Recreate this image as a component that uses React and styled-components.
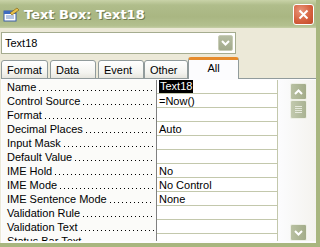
import React from 'react';
import styled, {createGlobalStyle} from 'styled-components';

const Global = createGlobalStyle`
    html, body {
        margin: 0;
        padding: 0;
        background: #ece9d8;
    }
    body {
        font-family: "Liberation Sans", Arial, sans-serif;
        font-size: 11px;
        color: #000;
    }
`;

const Window = styled.div`
    width: 320px;
    height: 247px;
    overflow: hidden;
    display: flex;
    flex-direction: column;
    background: #ece9d8;
    box-sizing: border-box;
    border-right: 4px solid #a8b67f;
    border-bottom: 4px solid #a8b67f;
`;

const TitleBar = styled.div`
    height: 28px;
    margin-right: -4px;
    flex: none;
    display: flex;
    align-items: center;
    padding: 0 6px 0 3px;
    background: linear-gradient(#c9d3a8 0%, #b0bd8b 18%, #a9b682 60%, #b3c08f 92%, #c5cea6 100%);
`;

const Title = styled.div`
    flex: 1;
    margin-left: 4px;
    color: #fff;
    font-family: "DejaVu Sans", sans-serif;
    font-weight: bold;
    font-size: 13px;
    letter-spacing: 0;
    text-shadow: 1px 1px 0 #6f7a4e;
`;

const CloseButton = styled.div`
    width: 21px;
    height: 21px;
    box-sizing: border-box;
    border: 1px solid #fff;
    border-radius: 3px;
    background: radial-gradient(circle at 35% 30%, #e8957a, #d6623f 55%, #c1492a);
    display: flex;
    align-items: center;
    justify-content: center;
`;

const Body = styled.div`
    flex: 1;
    display: flex;
    flex-direction: column;
    padding: 4px 0 0 1px;
    min-height: 0;
`;

const Combo = styled.div`
    width: 235px;
    height: 22px;
    box-sizing: border-box;
    border: 1px solid #a5ac8f;
    background: #fff;
    display: flex;
    align-items: center;
    padding: 0 2px 0 3px;
`;

const ComboText = styled.div`
    flex: 1;
`;

const DropButton = styled.div`
    width: 15px;
    height: 16px;
    border-radius: 2px;
    background: linear-gradient(#b6bda2, #a2aa8c);
    border: 1px solid #c8ccb6;
    box-sizing: border-box;
    display: flex;
    align-items: center;
    justify-content: center;
`;

const TabStrip = styled.div`
    display: flex;
    align-items: flex-end;
    height: 22px;
    margin-top: 3px;
    flex: none;
`;

const Tab = styled.div`
    width: ${p => p.w}px;
    height: ${p => (p.active ? 22 : 19)}px;
    box-sizing: border-box;
    margin-right: ${p => p.gap}px;
    border: 1px solid #919b9c;
    border-bottom: ${p => (p.active ? 'none' : '1px solid #919b9c')};
    border-top: ${p => (p.active ? '3px solid #e68b2c' : '1px solid #919b9c')};
    border-radius: 3px 3px 0 0;
    background: ${p => (p.active ? '#fcfcfe' : 'linear-gradient(#fff, #f3f3ef 70%, #e6e5de)')};
    display: flex;
    align-items: center;
    justify-content: ${p => (p.active ? 'center' : 'flex-start')};
    padding-left: ${p => (p.active ? 0 : 5)}px;
    padding-bottom: ${p => (p.active ? 3 : 0)}px;
    position: relative;
    z-index: ${p => (p.active ? 1 : 0)};
`;

const Panel = styled.div`
    flex: 1;
    display: flex;
    min-height: 0;
    margin-top: -1px;
    border-top: 1px solid #919b9c;
    background: #fcfcfe;
    padding: 1px 0 2px 1px;
`;

const Grid = styled.div`
    width: 275px;
    flex: none;
    overflow: hidden;
    background: #fff;
    border-right: 1px solid #c3c8ac;
`;

const Row = styled.div`
    display: flex;
    height: 14px;
`;

const Label = styled.div`
    width: 155px;
    flex: none;
    display: flex;
    align-items: center;
    padding-left: 5px;
    box-sizing: border-box;
    border-right: 1px solid #808080;
    background: #fbfbf9;
    white-space: nowrap;
`;

const Leader = styled.span`
    flex: 1;
    align-self: stretch;
    margin: 0 2px 0 3px;
    background-image: repeating-linear-gradient(to right, #000 0 1px, transparent 1px 4px);
    background-size: 100% 1px;
    background-repeat: no-repeat;
    background-position: 0 10px;
`;

const Value = styled.div`
    flex: 1;
    box-sizing: border-box;
    border-bottom: 1px solid #c3c8ac;
    padding-left: 2px;
    display: flex;
    align-items: center;
    white-space: nowrap;
`;

const Selected = styled.span`
    background: #000;
    color: #fff;
    padding: 0 1px;
    line-height: 13px;
`;

const Scrollbar = styled.div`
    flex: 1;
    display: flex;
    flex-direction: column;
    align-items: center;
    padding: 3px 0 0 3px;
    background: linear-gradient(to right, #fcfcfe, #f4f3ee);
`;

const ScrollButton = styled.div`
    width: 17px;
    height: 17px;
    box-sizing: border-box;
    border: 1px solid #eef0e6;
    border-radius: 2px;
    background: linear-gradient(to right, #b9c1a2, #a3ac89);
    display: flex;
    align-items: center;
    justify-content: center;
    flex: none;
`;

const Thumb = styled.div`
    width: 17px;
    height: 19px;
    box-sizing: border-box;
    border: 1px solid #eef0e6;
    border-radius: 2px;
    background: linear-gradient(to right, #c2c9ae, #aab393);
    display: flex;
    flex-direction: column;
    align-items: center;
    justify-content: center;
    gap: 1px;
`;

const Grip = styled.div`
    width: 7px;
    height: 1px;
    background: #e6e9dc;
`;

const Track = styled.div`
    flex: 1;
`;

const rows = [
    ['Name', 'Text18', true],
    ['Control Source', '=Now()'],
    ['Format', ''],
    ['Decimal Places', 'Auto'],
    ['Input Mask', ''],
    ['Default Value', ''],
    ['IME Hold', 'No'],
    ['IME Mode', 'No Control'],
    ['IME Sentence Mode', 'None'],
    ['Validation Rule', ''],
    ['Validation Text', ''],
    ['Status Bar Text', ''],
];

const tabs = [
    {name: 'Format', w: 47, gap: 2},
    {name: 'Data', w: 46, gap: 2},
    {name: 'Event', w: 46, gap: 0},
    {name: 'Other', w: 44, gap: 0},
    {name: 'All', w: 51, gap: 0, active: true},
];

const Chevron = ({up}) => (
    <svg width="9" height="6" viewBox="0 0 9 6">
        <path d={up ? 'M1 5 L4.5 1.5 L8 5' : 'M1 1 L4.5 4.5 L8 1'} fill="none" stroke="#fff" strokeWidth="2" />
    </svg>
);

const SheetIcon = () => (
    <svg width="17" height="15" viewBox="0 0 17 15">
        <rect x="1" y="4" width="12" height="10" fill="#fff" stroke="#3a5fa8" />
        <rect x="1" y="4" width="12" height="3" fill="#3f6cc0" />
        <path d="M3 9 H11 M3 11 H11" stroke="#6f8fc8" />
        <path d="M7 6 L14 1 L16 3 L9 8 Z" fill="#e8c24a" stroke="#8a6a1a" strokeWidth="0.7" />
    </svg>
);

export default function App() {
    return (
        <Window>
            <Global />
            <TitleBar>
                <SheetIcon />
                <Title>Text Box: Text18</Title>
                <CloseButton>
                    <svg width="11" height="11" viewBox="0 0 11 11">
                        <path d="M1.5 1.5 L9.5 9.5 M9.5 1.5 L1.5 9.5" stroke="#fff" strokeWidth="2" />
                    </svg>
                </CloseButton>
            </TitleBar>
            <Body>
                <Combo>
                    <ComboText>Text18</ComboText>
                    <DropButton><Chevron /></DropButton>
                </Combo>
                <TabStrip>
                    {tabs.map(t => (
                        <Tab key={t.name} w={t.w} gap={t.gap} active={t.active}>{t.name}</Tab>
                    ))}
                </TabStrip>
                <Panel>
                    <Grid>
                        {rows.map(([label, value, sel]) => (
                            <Row key={label}>
                                <Label>{label}<Leader /></Label>
                                <Value>{sel ? <Selected>{value}</Selected> : value}</Value>
                            </Row>
                        ))}
                    </Grid>
                    <Scrollbar>
                        <ScrollButton><Chevron up /></ScrollButton>
                        <Thumb><Grip /><Grip /><Grip /><Grip /></Thumb>
                        <Track />
                        <ScrollButton><Chevron /></ScrollButton>
                    </Scrollbar>
                </Panel>
            </Body>
        </Window>
    );
}
